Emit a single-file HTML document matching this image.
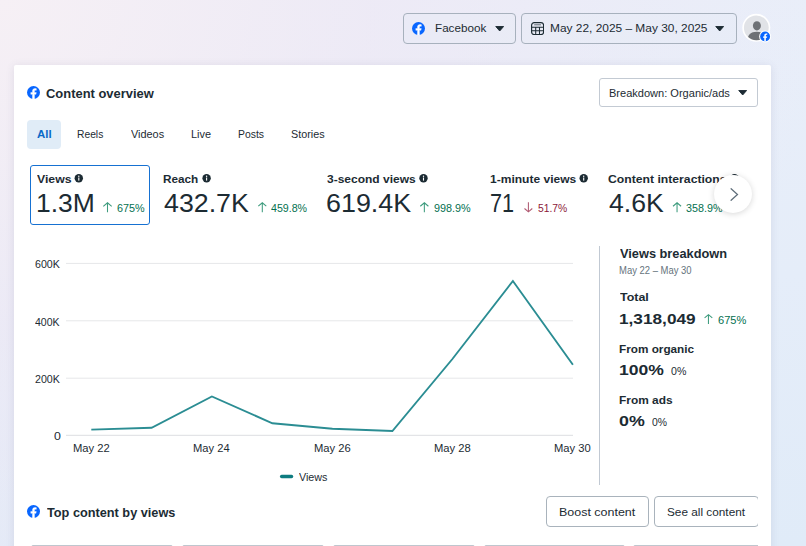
<!DOCTYPE html>
<html lang="en">
<head>
<meta charset="utf-8">
<title>Content overview</title>
<style>
*{box-sizing:border-box;margin:0;padding:0}
html,body{width:806px;height:546px;overflow:hidden}
body{font-family:"Liberation Sans",sans-serif;color:#1c2b33;position:relative;background:#e9ecf7}
.bg1{position:absolute;left:0;top:0;width:806px;height:546px;background:radial-gradient(ellipse 820px 720px at 0 0,#f6f0f5 0%,rgba(240,232,244,.62) 45%,rgba(236,230,245,0) 100%),linear-gradient(180deg,#e9eef9 0%,#e5edf9 50%,#e0ebf8 100%)}
.bg2{display:none}
.abs{position:absolute;white-space:nowrap}
.card{position:absolute;left:14px;top:65px;width:757px;height:500px;background:#fff;border-radius:2px 2px 0 0;box-shadow:0 1px 9px rgba(70,70,115,.12)}
.clip{position:absolute;left:0;top:0;width:758px;height:546px;overflow:hidden}
.btn{position:absolute;border:1px solid #a7b1bd;border-radius:4px;background:rgba(228,234,246,.3)}
.t{position:absolute;white-space:nowrap;line-height:1;transform-origin:0 0}
.b{font-weight:bold}
.lt{}
</style>
</head>
<body>
<div class="bg1"></div><div class="bg2"></div>

<!-- top bar -->
<div class="btn" style="left:403px;top:13px;width:113px;height:31px"></div>
<svg class="abs" style="left:412.400px;top:21.600px" width="13" height="13" viewBox="0 0 12 12"><circle cx="6" cy="6" r="6" fill="#0866ff"/><path d="M8.3 7.7l.27-1.7H6.9V4.9c0-.47.23-.93.97-.93h.75V2.5s-.68-.12-1.33-.12c-1.36 0-2.25.82-2.25 2.32V6H3.5v1.7h1.54V12h1.86V7.7z" fill="#fff" stroke="#fff" stroke-width=".35"/></svg>
<svg class="abs" style="left:495px;top:25.500px" width="9.400" height="5.640" viewBox="0 0 10 6"><path d="M.8 .5h8.400L5 5.300z" fill="#1c2b33" stroke="#1c2b33" stroke-width="1" stroke-linejoin="round"/></svg>

<div class="btn" style="left:521px;top:13px;width:216px;height:31px"></div>
<svg class="abs" style="left:530.900px;top:21.900px" width="13.200" height="13.200" viewBox="0 0 13.200 13.200" fill="none" stroke="#1c2b33"><rect x=".6" y=".6" width="12" height="12" rx="2.600" stroke-width="1.150"/><path d="M.6 5.200h12M.6 8.700h12M4.700 5.200v7.400M8.500 5.200v7.400" stroke-width="1.050"/><path d="M3.600 2.800h6" stroke-width="1" stroke-opacity=".65" stroke-linecap="round"/></svg>
<svg class="abs" style="left:715px;top:25.500px" width="9.400" height="5.640" viewBox="0 0 10 6"><path d="M.8 .5h8.400L5 5.300z" fill="#1c2b33" stroke="#1c2b33" stroke-width="1" stroke-linejoin="round"/></svg>

<!-- avatar -->
<svg class="abs" style="left:741px;top:13px" width="32" height="32" viewBox="0 0 32 32">
<circle cx="15.300" cy="14.800" r="14" fill="#fff"/>
<circle cx="15.300" cy="14.800" r="12.400" fill="#e1e3e7"/>
<clipPath id="ac"><circle cx="15.300" cy="14.800" r="12.400"/></clipPath>
<g clip-path="url(#ac)" fill="#6e7175"><ellipse cx="15.900" cy="12.800" rx="4" ry="4.600"/><path d="M6.300 28c.3-6.200 3.300-9.200 9.600-9.200s9.300 3 9.600 9.200z"/></g>
<circle cx="24.100" cy="23.400" r="6" fill="#fff"/>
<circle cx="24.100" cy="23.400" r="4.950" fill="#0866ff"/>
<path transform="translate(19.150 18.450) scale(.825)" d="M8.300 7.700l.27-1.700H6.900V4.900c0-.47.23-.93.970-.93h.75V2.500s-.68-.12-1.330-.12c-1.360 0-2.250.82-2.250 2.320V6H3.500v1.700h1.540V12h1.860V7.700z" fill="#fff"/>
</svg>

<div class="card"></div>
<div class="clip">

<!-- header -->
<svg class="abs" style="left:27px;top:86px" width="13" height="13" viewBox="0 0 12 12"><circle cx="6" cy="6" r="6" fill="#0866ff"/><path d="M8.3 7.7l.27-1.7H6.9V4.9c0-.47.23-.93.97-.93h.75V2.5s-.68-.12-1.330-.12c-1.360 0-2.250.82-2.250 2.320V6H3.500v1.700h1.540V12h1.860V7.700z" fill="#fff" stroke="#fff" stroke-width=".35"/></svg>

<div class="abs" style="left:599px;top:78px;width:159px;height:29px;border:1px solid #c3cad3;border-radius:3px;background:#fff"></div>
<svg class="abs" style="left:738px;top:90.400px" width="9.400" height="5.640" viewBox="0 0 10 6"><path d="M.8 .5h8.400L5 5.300z" fill="#1c2b33" stroke="#1c2b33" stroke-width="1" stroke-linejoin="round"/></svg>

<!-- tabs -->
<div class="abs" style="left:27px;top:120px;width:34px;height:28.500px;background:#e0ecf7;border-radius:4px"></div>

<!-- metrics -->
<div class="abs" style="left:30px;top:165px;width:120px;height:59.500px;border:1.500px solid #1671d2;border-radius:3px"></div>

<div class="abs" style="left:546px;top:496px;width:103px;height:31px;border:1px solid #a9b3bc;border-radius:4px;background:#fff"></div>
<div class="abs" style="left:654px;top:496px;width:105px;height:31px;border:1px solid #a9b3bc;border-radius:4px;background:#fff"></div>

<!-- chart -->
<svg class="abs" style="left:0;top:0" width="806" height="546" viewBox="0 0 806 546">
<g stroke="#e6e7e9" stroke-width="1">
<path d="M66 263.400H573M66 320.800H573M66 378.200H573"/>
<path d="M66 435.300H573" stroke="#dcdee1"/>
</g>
<path d="M599.500 246V485" stroke="#c1c9d3" stroke-width="1"/>
<polyline fill="none" stroke="#2b8d93" stroke-width="1.900" stroke-linejoin="miter" points="91.300,429.600 151.600,427.800 211.900,396.500 272.400,423.300 332.400,428.700 392.400,431 452.400,359 512.900,281 572.900,364.800"/>
<path d="M281.600 476.500h10" stroke="#0e7c80" stroke-width="3.300" stroke-linecap="round"/>
<path d="M107.50 212.30V202.80M103.30 206.37L107.50 202.80L111.70 206.37" fill="none" stroke="#3e9c7e" stroke-width="1.05"/>
<path d="M262.30 212.30V202.80M258.30 206.20L262.30 202.80L266.30 206.20" fill="none" stroke="#3e9c7e" stroke-width="1.05"/>
<path d="M424.35 212.30V202.80M420.30 206.24L424.35 202.80L428.40 206.24" fill="none" stroke="#3e9c7e" stroke-width="1.05"/>
<path d="M528.40 202.30V211.80M524.50 208.49L528.40 211.80L532.30 208.49" fill="none" stroke="#b05a72" stroke-width="1.05"/>
<path d="M677.05 212.30V202.80M673.00 206.24L677.05 202.80L681.10 206.24" fill="none" stroke="#3e9c7e" stroke-width="1.05"/>
<path d="M708.45 324.00V314.70M704.60 317.97L708.45 314.70L712.30 317.97" fill="none" stroke="#3e9c7e" stroke-width="1.05"/>
<g><circle cx="78.8" cy="178.3" r="4.2" fill="#1c2b33"/><rect x="78.25" y="177.5" width="1.1" height="3.1" fill="#fff"/><circle cx="78.8" cy="176.20000000000002" r=".7" fill="#fff"/></g>
<g><circle cx="206.6" cy="178.3" r="4.2" fill="#1c2b33"/><rect x="206.04999999999998" y="177.5" width="1.1" height="3.1" fill="#fff"/><circle cx="206.6" cy="176.20000000000002" r=".7" fill="#fff"/></g>
<g><circle cx="423.5" cy="178.3" r="4.2" fill="#1c2b33"/><rect x="422.95" y="177.5" width="1.1" height="3.1" fill="#fff"/><circle cx="423.5" cy="176.20000000000002" r=".7" fill="#fff"/></g>
<g><circle cx="583.7" cy="178.3" r="4.2" fill="#1c2b33"/><rect x="583.1500000000001" y="177.5" width="1.1" height="3.1" fill="#fff"/><circle cx="583.7" cy="176.20000000000002" r=".7" fill="#fff"/></g>
<g><circle cx="734.5" cy="178.3" r="4.2" fill="#1c2b33"/><rect x="733.95" y="177.5" width="1.1" height="3.1" fill="#fff"/><circle cx="734.5" cy="176.20000000000002" r=".7" fill="#fff"/></g>
</svg>

<div class="t" style="left:434.57px;top:22.63px;font-size:11.3px;color:#1c2b33;transform:scaleX(1.0333)">Facebook</div>
<div class="t" style="left:549.65px;top:22.63px;font-size:11.3px;color:#1c2b33;transform:scaleX(1.0537)">May 22, 2025 – May 30, 2025</div>
<div class="t b" style="left:46.48px;top:87.00px;font-size:13px;color:#1c2b33;transform:scaleX(0.9948)">Content overview</div>
<div class="t" style="left:608.52px;top:88.19px;font-size:11px;color:#1c2b33;transform:scaleX(1.0035)">Breakdown: Organic/ads</div>
<div class="t b" style="left:37.17px;top:128.69px;font-size:11px;color:#0a69c7;transform:scaleX(1.0390)">All</div>
<div class="t" style="left:76.98px;top:128.69px;font-size:11px;color:#1c2b33;transform:scaleX(0.9345)">Reels</div>
<div class="t" style="left:130.70px;top:128.69px;font-size:11px;color:#1c2b33;transform:scaleX(0.9894)">Videos</div>
<div class="t" style="left:190.83px;top:128.69px;font-size:11px;color:#1c2b33;transform:scaleX(0.9922)">Live</div>
<div class="t" style="left:237.77px;top:128.69px;font-size:11px;color:#1c2b33;transform:scaleX(0.9449)">Posts</div>
<div class="t" style="left:291.21px;top:128.69px;font-size:11px;color:#1c2b33;transform:scaleX(0.9804)">Stories</div>
<div class="t b" style="left:36.84px;top:173.59px;font-size:11px;color:#1c2b33;transform:scaleX(1.1135)">Views</div>
<div class="t b" style="left:163.34px;top:173.59px;font-size:11px;color:#1c2b33;transform:scaleX(1.0685)">Reach</div>
<div class="t b" style="left:326.76px;top:173.59px;font-size:11px;color:#1c2b33;transform:scaleX(1.0905)">3-second views</div>
<div class="t b" style="left:489.68px;top:173.59px;font-size:11px;color:#1c2b33;transform:scaleX(1.0938)">1-minute views</div>
<div class="t b" style="left:608.21px;top:173.59px;font-size:11px;color:#1c2b33;transform:scaleX(1.1083)">Content interactions</div>
<div class="t lt" style="left:35.91px;top:189.59px;font-size:26px;color:#1c2b33;transform:scaleX(1.0181)">1.3M</div>
<div class="t lt" style="left:163.86px;top:189.59px;font-size:26px;color:#1c2b33;transform:scaleX(1.0293)">432.7K</div>
<div class="t lt" style="left:326.06px;top:189.59px;font-size:26px;color:#1c2b33;transform:scaleX(1.0331)">619.4K</div>
<div class="t lt" style="left:490.12px;top:189.59px;font-size:26px;color:#1c2b33;transform:scaleX(0.8327)">71</div>
<div class="t lt" style="left:608.57px;top:189.59px;font-size:26px;color:#1c2b33;transform:scaleX(1.0249)">4.6K</div>
<div class="t" style="left:116.76px;top:203.19px;font-size:11px;color:#03704f;transform:scaleX(0.9813)">675%</div>
<div class="t" style="left:271.39px;top:203.19px;font-size:11px;color:#03704f;transform:scaleX(0.9670)">459.8%</div>
<div class="t" style="left:433.61px;top:203.19px;font-size:11px;color:#03704f;transform:scaleX(0.9825)">998.9%</div>
<div class="t" style="left:538.19px;top:203.19px;font-size:11px;color:#8c1839;transform:scaleX(0.9383)">51.7%</div>
<div class="t" style="left:686.42px;top:203.19px;font-size:11px;color:#03704f;transform:scaleX(0.9768)">358.9%</div>
<div class="t b" style="left:619.94px;top:246.70px;font-size:13px;color:#1c2b33;transform:scaleX(0.9833)">Views breakdown</div>
<div class="t" style="left:619.24px;top:266.24px;font-size:10px;color:#66737d;transform:scaleX(0.9465)">May 22 – May 30</div>
<div class="t b" style="left:619.88px;top:291.69px;font-size:11px;color:#1c2b33;transform:scaleX(1.1300)">Total</div>
<div class="t b" style="left:618.97px;top:310.58px;font-size:15.5px;color:#1c2b33;transform:scaleX(1.1117)">1,318,049</div>
<div class="t" style="left:717.75px;top:315.29px;font-size:11px;color:#03704f;transform:scaleX(1.0071)">675%</div>
<div class="t b" style="left:619.24px;top:343.59px;font-size:11px;color:#1c2b33;transform:scaleX(1.0681)">From organic</div>
<div class="t b" style="left:618.95px;top:362.08px;font-size:15.5px;color:#1c2b33;transform:scaleX(1.1320)">100%</div>
<div class="t" style="left:670.63px;top:366.09px;font-size:11px;color:#1c2b33;transform:scaleX(0.9645)">0%</div>
<div class="t b" style="left:619.23px;top:394.69px;font-size:11px;color:#1c2b33;transform:scaleX(1.0806)">From ads</div>
<div class="t b" style="left:619.38px;top:412.98px;font-size:15.5px;color:#1c2b33;transform:scaleX(1.1496)">0%</div>
<div class="t" style="left:651.54px;top:416.99px;font-size:11px;color:#1c2b33;transform:scaleX(0.9447)">0%</div>
<div class="t b" style="left:47.17px;top:506.10px;font-size:13px;color:#1c2b33;transform:scaleX(0.9784)">Top content by views</div>
<div class="t" style="left:559.00px;top:507.23px;font-size:11.3px;color:#1c2b33;transform:scaleX(1.1032)">Boost content</div>
<div class="t" style="left:667.17px;top:507.23px;font-size:11.3px;color:#1c2b33;transform:scaleX(1.0442)">See all content</div>
<div class="t" style="left:35.17px;top:259.13px;font-size:11.3px;color:#1c2b33;transform:scaleX(0.9438)">600K</div>
<div class="t" style="left:35.49px;top:316.53px;font-size:11.3px;color:#1c2b33;transform:scaleX(0.9315)">400K</div>
<div class="t" style="left:35.17px;top:373.93px;font-size:11.3px;color:#1c2b33;transform:scaleX(0.9438)">200K</div>
<div class="t" style="left:53.57px;top:430.93px;font-size:11.3px;color:#1c2b33;transform:scaleX(1.0948)">0</div>
<div class="t" style="left:73.00px;top:442.97px;font-size:11.5px;color:#1c2b33;transform:scaleX(0.9763)">May 22</div>
<div class="t" style="left:193.41px;top:442.97px;font-size:11.5px;color:#1c2b33;transform:scaleX(0.9701)">May 24</div>
<div class="t" style="left:313.60px;top:442.97px;font-size:11.5px;color:#1c2b33;transform:scaleX(0.9747)">May 26</div>
<div class="t" style="left:433.80px;top:442.97px;font-size:11.5px;color:#1c2b33;transform:scaleX(0.9747)">May 28</div>
<div class="t" style="left:554.10px;top:442.97px;font-size:11.5px;color:#1c2b33;transform:scaleX(0.9732)">May 30</div>
<div class="t" style="left:299.20px;top:471.77px;font-size:11.5px;color:#1c2b33;transform:scaleX(0.9346)">Views</div>

<!-- bottom -->
<svg class="abs" style="left:27px;top:505.400px" width="13" height="13" viewBox="0 0 12 12"><circle cx="6" cy="6" r="6" fill="#0866ff"/><path d="M8.3 7.7l.27-1.7H6.9V4.900c0-.47.23-.93.970-.93h.75V2.500s-.68-.12-1.330-.12c-1.360 0-2.250.82-2.250 2.320V6H3.500v1.700h1.540V12h1.860V7.700z" fill="#fff" stroke="#fff" stroke-width=".35"/></svg>


<!-- content cards (peeking) -->
<div class="abs" style="left:31px;top:545px;width:142px;height:40px;border:1px solid #bfc6ce;border-radius:2px"></div>
<div class="abs" style="left:182px;top:545px;width:142px;height:40px;border:1px solid #bfc6ce;border-radius:2px"></div>
<div class="abs" style="left:333px;top:545px;width:142px;height:40px;border:1px solid #bfc6ce;border-radius:2px"></div>
<div class="abs" style="left:484px;top:545px;width:141px;height:40px;border:1px solid #bfc6ce;border-radius:2px"></div>
<div class="abs" style="left:633px;top:545px;width:143px;height:40px;border:1px solid #bfc6ce;border-radius:2px"></div>

<!-- scroll button -->
<div class="abs" style="left:714px;top:175.400px;width:38px;height:38px;border-radius:50%;background:#fff;box-shadow:0 1px 6px rgba(0,0,0,.16)"></div>
<svg class="abs" style="left:728px;top:187px" width="14" height="16" viewBox="0 0 14 16" fill="none" stroke="#5f6e7a" stroke-width="1.250" stroke-linecap="round" stroke-linejoin="miter"><path d="M3.100 1.700L9.500 7.500 3.100 13.300"/></svg>
</div>
</body>
</html>
